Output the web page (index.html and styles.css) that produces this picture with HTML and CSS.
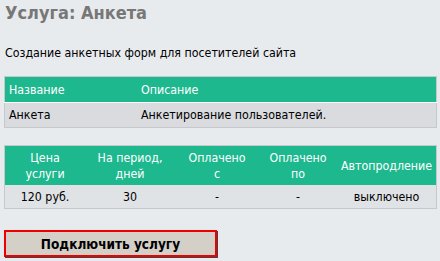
FILE: index.html
```html
<!DOCTYPE html>
<html lang="ru">
<head>
  <meta charset="UTF-8">
  <title>Услуга: Анкета</title>
  <link rel="stylesheet" href="styles.css">
</head>
<body>
  <h1>Услуга: Анкета</h1>
  <p class="desc">Создание анкетных форм для посетителей сайта</p>

  <table class="grid info">
    <tr>
      <th class="name">Название</th>
      <th>Описание</th>
    </tr>
    <tr>
      <td class="name">Анкета</td>
      <td>Анкетирование пользователей.</td>
    </tr>
  </table>

  <table class="grid prices">
    <tr>
      <th class="c1">Цена<br>услуги</th>
      <th class="c2">На период,<br>дней</th>
      <th class="c3">Оплачено<br>с</th>
      <th class="c4">Оплачено<br>по</th>
      <th>Автопродление</th>
    </tr>
    <tr>
      <td>120 руб.</td>
      <td>30</td>
      <td>-</td>
      <td>-</td>
      <td>выключено</td>
    </tr>
  </table>

  <button class="connect">Подключить услугу</button>
</body>
</html>
```

FILE: styles.css
```css
body {
  font-family: "DejaVu Sans Condensed", "DejaVu Sans", sans-serif;
  font-size: 12.3px;
  background: #e8ebee;
  color: #000;
  margin: 0;
  padding: 2px 4px;
}
h1 {
  font-size: 18px;
  color: #777;
  margin: 0 0 0 1px;
  line-height: 22px;
}
.desc {
  margin: 21px 0 0 1px;
  line-height: 16px;
}
.grid {
  width: 433px;
  border-collapse: collapse;
  border: 1px solid #c6c9cc;
  background: #d9dbde;
  table-layout: fixed;
}
.grid th {
  background: #1eb88f;
  color: #fff;
  font-weight: normal;
}
.info {
  margin-top: 15px;
}
.info th, .info td {
  text-align: left;
  padding: 0 4px;
}
.info th {
  height: 25px;
  border-bottom: 1px solid #fff;
}
.info td {
  height: 24px;
}
.info .name {
  width: 124px;
}
.prices {
  margin-top: 17px;
}
.prices th, .prices td {
  text-align: center;
  padding: 0;
}
.prices th {
  height: 39px;
  line-height: 16px;
}
.prices .c1 { width: 80px; }
.prices .c2 { width: 90px; }
.prices .c3 { width: 84px; }
.prices .c4 { width: 78px; }
.prices td {
  height: 23px;
  background: #e0e3e6;
}
.connect {
  display: block;
  margin-top: 21px;
  width: 213px;
  height: 27px;
  font-family: inherit;
  font-size: 13.5px;
  font-weight: bold;
  background: #d4d0c8;
  border: 2px solid #e00;
  box-shadow: 1px 1px 0 #444;
  padding: 0;
}
```
